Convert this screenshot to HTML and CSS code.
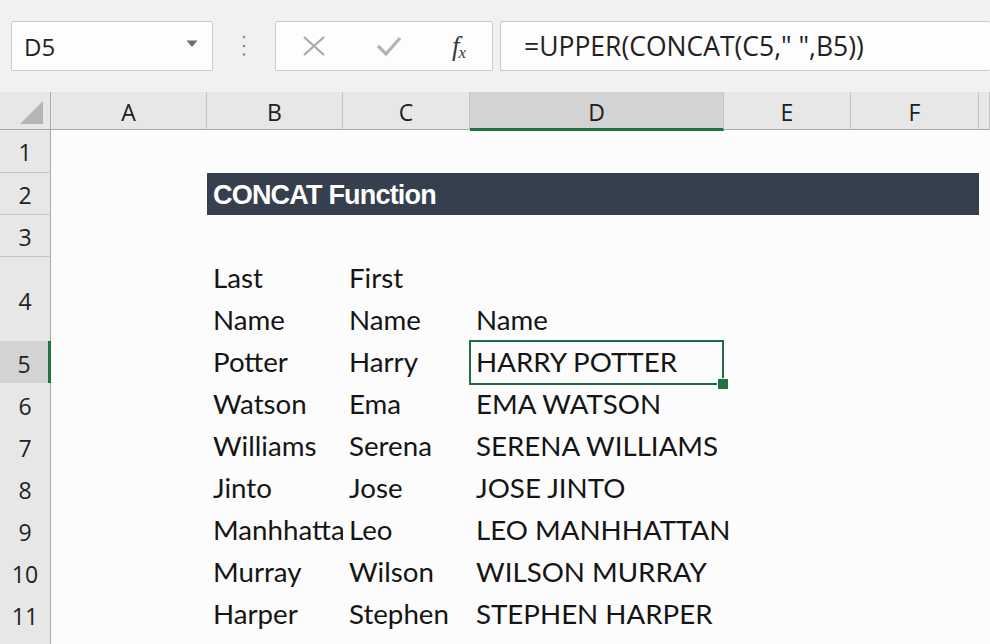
FILE: index.html
```html
<!DOCTYPE html>
<html>
<head>
<meta charset="utf-8">
<link rel="stylesheet" href="styles.css">
</head>
<body>
<div class="app">
  <div class="toolbar">
    <div class="namebox">
      <span class="nb-text">D5</span>
      <svg class="nb-arrow" width="12" height="8" viewBox="0 0 12 8"><path d="M0.5 0.5 H11.5 L6 7 Z" fill="#6d6d6d"/></svg>
    </div>
    <div class="dots">
      <svg width="4" height="22" viewBox="0 0 4 22"><circle cx="2" cy="2" r="1.3" fill="#8a8a8a"/><circle cx="2" cy="11" r="1.3" fill="#8a8a8a"/><circle cx="2" cy="19.5" r="1.3" fill="#8a8a8a"/></svg>
    </div>
    <div class="fbuttons">
      <svg class="fb-x" width="24" height="20" viewBox="0 0 24 20"><path d="M2 1 L22 19 M22 1 L2 19" stroke="#a9a9a9" stroke-width="2.2" fill="none"/></svg>
      <svg class="fb-check" width="26" height="22" viewBox="0 0 26 22"><path d="M2 11 L10 19 L24 3" stroke="#b3b3b3" stroke-width="3.2" fill="none" stroke-linejoin="miter"/></svg>
      <span class="fx"><span class="fx-f">f</span><span class="fx-x">x</span></span>
    </div>
    <div class="formula">=UPPER(CONCAT(C5," ",B5))</div>
  </div>

  <div class="sheet">
    <div class="row hdr">
      <div class="corner"><svg width="23" height="23" viewBox="0 0 23 23"><path d="M23 0 V23 H0 Z" fill="#b5b5b5"/></svg></div>
      <div class="ch">A</div>
      <div class="ch">B</div>
      <div class="ch">C</div>
      <div class="ch active">D</div>
      <div class="ch">E</div>
      <div class="ch">F</div>
      <div class="ch last"></div>
    </div>

    <div class="row r1"><div class="rh">1</div></div>
    <div class="row"><div class="rh">2</div><div class="c"></div><div class="title">CONCAT Function</div></div>
    <div class="row"><div class="rh">3</div></div>
    <div class="row r4">
      <div class="rh">4</div><div class="c"></div>
      <div class="c wrap">Last<br>Name</div>
      <div class="c wrap">First<br>Name</div>
      <div class="c">Name</div>
    </div>
    <div class="row">
      <div class="rh active">5</div><div class="c"></div>
      <div class="c clip">Potter</div><div class="c">Harry</div><div class="c sel">HARRY POTTER</div>
    </div>
    <div class="row">
      <div class="rh">6</div><div class="c"></div>
      <div class="c clip">Watson</div><div class="c">Ema</div><div class="c">EMA WATSON</div>
    </div>
    <div class="row">
      <div class="rh">7</div><div class="c"></div>
      <div class="c clip">Williams</div><div class="c">Serena</div><div class="c">SERENA WILLIAMS</div>
    </div>
    <div class="row">
      <div class="rh">8</div><div class="c"></div>
      <div class="c clip">Jinto</div><div class="c">Jose</div><div class="c">JOSE JINTO</div>
    </div>
    <div class="row">
      <div class="rh">9</div><div class="c"></div>
      <div class="c clip">Manhhattan</div><div class="c">Leo</div><div class="c">LEO MANHHATTAN</div>
    </div>
    <div class="row">
      <div class="rh">10</div><div class="c"></div>
      <div class="c clip">Murray</div><div class="c">Wilson</div><div class="c">WILSON MURRAY</div>
    </div>
    <div class="row">
      <div class="rh">11</div><div class="c"></div>
      <div class="c clip">Harper</div><div class="c">Stephen</div><div class="c">STEPHEN HARPER</div>
    </div>
    <div class="row"><div class="rh"></div></div>
  </div>
</div>
</body>
</html>
```

FILE: styles.css
```css
* { box-sizing: border-box; }
html, body { margin: 0; padding: 0; }
body {
  width: 990px;
  height: 644px;
  overflow: hidden;
  background: #fcfcfc;
  font-family: "Open Sans", "Liberation Sans", sans-serif;
  color: #1e1e1e;
}
.app { display: flex; flex-direction: column; width: 990px; height: 644px; }

/* toolbar */
.toolbar {
  height: 92px;
  flex: none;
  background: #f1f1f1;
  display: flex;
  align-items: flex-start;
  padding: 21px 0 0 11px;
}
.namebox, .fbuttons, .formula {
  height: 50px;
  background: #fdfdfd;
  border: 1px solid #c9c9c9;
  border-radius: 2px;
  display: flex;
  align-items: center;
}
.namebox {
  width: 202px;
  padding: 0 14px 0 12px;
  justify-content: space-between;
}
.nb-text { font-size: 24px; color: #222; }
.nb-arrow { margin-top: -4px; }
.dots { width: 62px; height: 50px; display: flex; align-items: center; justify-content: center; }
.fbuttons {
  width: 218px;
  padding: 0 26px 0 26px;
  justify-content: space-between;
}
.fx {
  font-family: "Liberation Serif", serif;
  font-style: italic;
  color: #3a3a3a;
  display: inline-flex;
  align-items: flex-end;
}
.fx-f { font-size: 27px; }
.fx-x { font-size: 17px; position: relative; top: 1px; margin-left: -1px; }
.formula {
  flex: 1;
  margin-left: 7px;
  border-right: none;
  padding-left: 23px;
  font-size: 26.5px;
  color: #222;
}

/* sheet */
.sheet { flex: 1; display: flex; flex-direction: column; overflow: hidden; }
.row {
  display: grid;
  grid-template-columns: 51px 156px 136px 127px 254px 127px 128px 1fr;
  height: 42px;
  flex: none;
}
.row.hdr { height: 38px; background: #e7e7e7; border-bottom: 1px solid #a9a9a9; }
.row.r1 { height: 43px; }
.row.r4 { height: 84px; }

.corner {
  border-right: 1px solid #a9a9a9;
  display: flex;
  align-items: flex-end;
  justify-content: flex-end;
  padding: 0 7px 6px 0;
}
.ch {
  border-right: 1px solid #c3c3c3;
  display: flex;
  align-items: center;
  justify-content: center;
  font-size: 23px;
  color: #202020;
  padding-top: 2px;
}
.ch.active {
  background: #d3d3d3;
  border-bottom: 3px solid #217346;
  margin-bottom: -1px;
  padding-top: 4px;
}

.rh {
  background: #e7e7e7;
  border-right: 1px solid #a9a9a9;
  border-bottom: 1px solid #c6c6c6;
  display: flex;
  align-items: center;
  justify-content: center;
  font-size: 23px;
  color: #222;
  padding-top: 2px;
}
.rh.active { background: #d3d3d3; border-right: 3px solid #217346; }

.c {
  display: flex;
  align-items: flex-end;
  padding: 0 6px 2px 6px;
  font-family: "Lato", "Open Sans", sans-serif;
  font-size: 27.7px;
  line-height: 42px;
  white-space: nowrap;
  color: #151515;
}
.c.clip { overflow: hidden; }

.title {
  grid-column: 3 / 8;
  background: #363f4e;
  color: #ffffff;
  font-family: "Liberation Sans", sans-serif;
  font-weight: bold;
  font-size: 27px;
  letter-spacing: -0.8px;
  display: flex;
  align-items: center;
  padding: 2px 6px 0 6px;
}

.sel { position: relative; }
.sel::before {
  content: "";
  position: absolute;
  left: -1px; top: -1px; right: 0; bottom: 0;
  border: 2px solid #1f6b43;
}
.sel::after {
  content: "";
  position: absolute;
  right: -5px; bottom: -5px;
  width: 10px; height: 10px;
  background: #217346;
  border: 1px solid #fcfcfc;
}
```
